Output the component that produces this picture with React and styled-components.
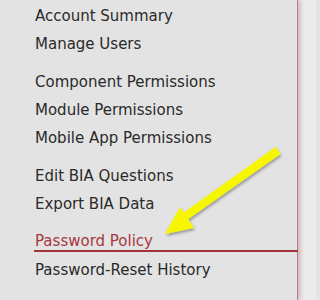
import React from 'react';
import styled, { createGlobalStyle } from 'styled-components';

const GlobalStyle = createGlobalStyle`
  html, body {
    margin: 0;
    padding: 0;
    background: #e4e4e4;
  }
`;

const Page = styled.div`
  position: relative;
  display: flex;
  width: 316px;
  height: 300px;
  overflow: hidden;
  background: #ececec;
`;

const Sidebar = styled.nav`
  width: 298px;
  height: 100%;
  box-sizing: border-box;
  padding: 2px 0 0 34px;
  background: #e3e3e3;
  border-right: 1px solid #b57f86;
  box-shadow: 2px 0 5px rgba(170, 90, 100, 0.45);
  font-family: "DejaVu Sans", Verdana, sans-serif;
  font-size: 15px;
`;

const Group = styled.ul`
  list-style: none;
  margin: 0 0 10px;
  padding: 0;
`;

const Item = styled.li`
  height: 28px;
  display: flex;
  align-items: center;
  padding-left: 1px;
  box-sizing: border-box;
  color: #2a2a2a;
`;

const ActiveItem = styled(Item)`
  height: 24px;
  margin: 0 -1px 4px 0;
  align-items: flex-end;
  line-height: 18px;
  color: #a83740;
  border-bottom: 2px solid #a3343b;
`;

const Arrow = styled.svg`
  position: absolute;
  left: 0;
  top: 0;
  pointer-events: none;
`;

const groups = [
  ['Account Summary', 'Manage Users'],
  ['Component Permissions', 'Module Permissions', 'Mobile App Permissions'],
  ['Edit BIA Questions', 'Export BIA Data'],
  ['Password Policy', 'Password-Reset History'],
];

export default function App() {
  return (
    <>
      <GlobalStyle />
      <Page>
        <Sidebar>
          {groups.map((g, i) => (
            <Group key={i}>
              {g.map((label) =>
                label === 'Password Policy' ? (
                  <ActiveItem key={label}>{label}</ActiveItem>
                ) : (
                  <Item key={label}>{label}</Item>
                )
              )}
            </Group>
          ))}
        </Sidebar>
        <Arrow width="316" height="300" viewBox="0 0 316 300">
          <defs>
            <filter id="sh" x="-20%" y="-20%" width="140%" height="140%">
              <feDropShadow dx="1" dy="2" stdDeviation="1.5" floodColor="#000" floodOpacity="0.35" />
            </filter>
          </defs>
          <g filter="url(#sh)" fill="#f6f600" stroke="none">
            <polygon points="275.5,147 280.5,154 187,220 183,213" />
            <polygon points="165,234 180,207 194,228" />
          </g>
        </Arrow>
      </Page>
    </>
  );
}
